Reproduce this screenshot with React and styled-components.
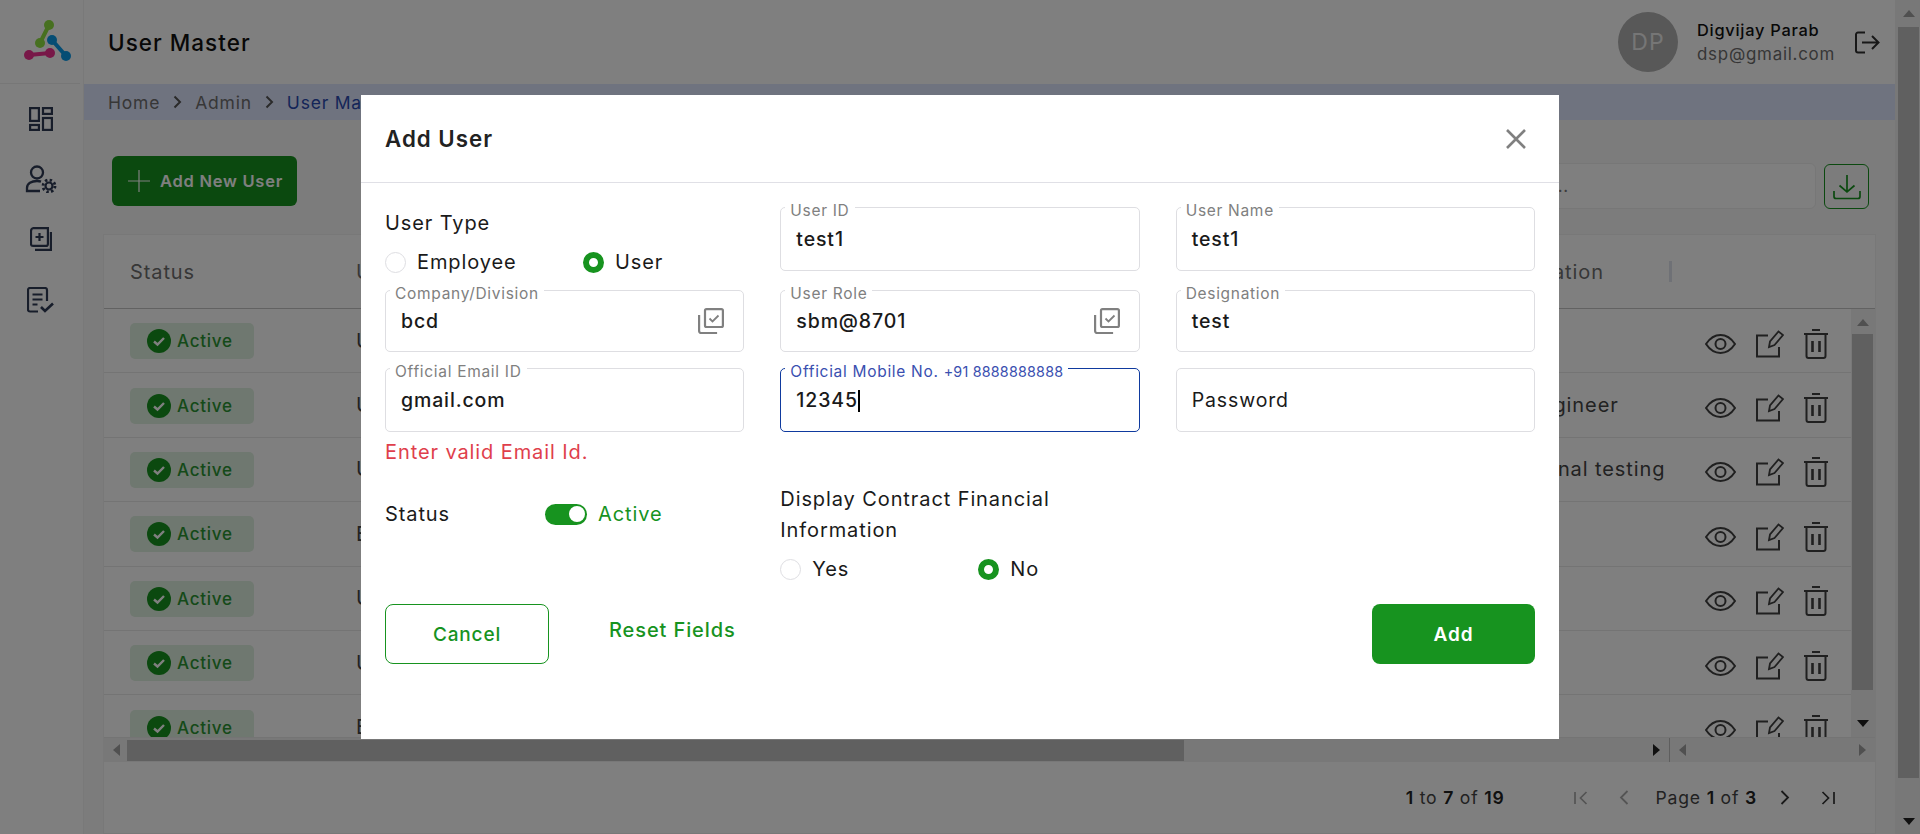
import React from "react";
import styled, { createGlobalStyle } from "styled-components";

const Global = createGlobalStyle`
  html, body { margin: 0; padding: 0; height: 834px; overflow: hidden; background: #fff; }
  body { font-family: "Inter", "Noto Sans", sans-serif; color: #1d1d1f; }
  * { box-sizing: border-box; letter-spacing: .045em; }
`;

const GREEN = "#17931f";

const Page = styled.div`display: flex; width: 1920px; height: 834px; overflow: hidden;`;
const Sidebar = styled.aside`width: 84px; flex: none; background: #fff; border-right: 1px solid #f2f2f2; display: flex; flex-direction: column; align-items: center;`;
const LogoBox = styled.div`width: 80px; margin-right: 3px; height: 84px; flex: none; border-bottom: 1px solid #eee; display: flex; align-items: center; justify-content: flex-start; padding-left: 24px;`;
const NavList = styled.nav`display: flex; flex-direction: column; align-items: center; gap: 34px; padding: 23px 2px 0 0; color: #2f3a55;`;
const NavLast = styled.span`display: flex; margin-top: 2px;`;
const Main = styled.main`flex: 1; min-width: 0; display: flex; flex-direction: column; background: #f9f9f9;`;
const TopBar = styled.header`height: 84px; flex: none; background: #fff; display: flex; align-items: center; padding: 0 15px 0 24px;`;
const PageTitle = styled.h1`margin: 0; flex: 1; font-size: 22.5px; font-weight: 500; color: #111;`;
const Avatar = styled.div`width: 60px; height: 60px; border-radius: 50%; background: #b0b0b0; color: #ececec; display: flex; align-items: center; justify-content: center; font-size: 23px; margin-right: 19px;`;
const UserBox = styled.div`display: flex; flex-direction: column; gap: 4px; width: 158px;`;
const UserName = styled.div`font-size: 16.4px; font-weight: 500; line-height: 20px; color: #111;`;
const UserMail = styled.div`font-size: 16.9px; line-height: 20px; color: #6d6d6d;`;
const Crumbs = styled.div`height: 36px; flex: none; background: #dfe6ff; display: flex; align-items: center; padding-left: 24px; font-size: 17.5px; color: #6f6f6f;`;
const CrumbSep = styled.span`display: flex; margin: 0 13px 0 13px; color: #555;`;
const CrumbNow = styled.span`color: #2a4bb0;`;
const Toolbar = styled.div`flex: none; display: flex; align-items: flex-start; padding: 36px 26px 0 28px; height: 114px;`;
const AddNew = styled.button`width: 185px; height: 50px; border: 0; border-radius: 6px; background: ${GREEN}; color: #fff; font: 600 16.5px "Inter", sans-serif; display: flex; align-items: center; gap: 10px; padding: 0 0 0 16px; white-space: nowrap;`;
const Spacer = styled.div`flex: 1;`;
const Search = styled.div`width: 400px; height: 46px; margin-top: 7px; background: #fff; border: 1px solid #eee; border-radius: 6px; display: flex; align-items: center; justify-content: flex-end; padding-right: 246px; font-size: 17px; color: #777;`;
const DownloadBtn = styled.button`width: 45px; height: 45px; margin: 8px 0 0 8px; padding: 0; border: 1px solid ${GREEN}; border-radius: 6px; background: transparent; color: ${GREEN}; display: flex; align-items: center; justify-content: center;`;

const Card = styled.section`flex: 1; margin: 0 19px; background: #fff; border: 1px solid #f0f0f0; display: flex; flex-direction: column; min-height: 0;`;
const HeadRow = styled.div`height: 74px; flex: none; display: grid; grid-template-columns: 226px 1126px 190px; align-items: center; padding-left: 26px; font-size: 20px; color: #6f6f6f; border-bottom: 1px solid #c4c4c4;`;
const HeadDesignation = styled.div`display: flex; align-items: center; justify-content: space-between;`;
const HeadSep = styled.span`width: 3px; height: 21px; background: #dfe3ec;`;
const BodyWrap = styled.div`height: 428px; flex: none; display: flex; overflow: hidden;`;
const Rows = styled.div`flex: 1; min-width: 0; overflow: hidden;`;
const Row = styled.div`height: 64.4px; display: grid; grid-template-columns: 226px 1126px 223px 1fr; align-items: center; padding-left: 26px; border-bottom: 1px solid #e8e8e8; font-size: 20px; color: #444;`;
const Badge = styled.div`width: 124px; height: 36px; margin-top: 1px; border-radius: 5px; background: #dff0e0; color: #2b9433; display: flex; align-items: center; gap: 6px; padding-left: 17px; font-size: 17px; font-weight: 500;`;
const Actions = styled.div`display: flex; align-items: center; margin-top: 6px; color: #404040;`;
const ActionSlot = styled.span`display: flex; margin-right: ${p => p.$gap}px;`;
const VBar = styled.div`width: 24px; flex: none; background: #f1f1f1; display: flex; flex-direction: column; align-items: center; padding: 10px 0 10px; gap: 8px;`;
const VThumb = styled.div`width: 21px; height: 356px; background: #c1c1c1; margin-left: -1px;`;
const HBar = styled.div`height: 25px; flex: none; background: #f1f1f1; display: flex; align-items: center; border-top: 1px solid #e8e8e8;`;
const HTrack = styled.div`width: 1566px; height: 100%; flex: none; display: flex; align-items: center; padding: 0 9px; border-right: 1px solid #bdbdbd;`;
const HThumb = styled.div`width: 1057px; height: 21px; background: #c1c1c1; margin: 0 auto 0 7px;`;
const HTrack2 = styled.div`flex: 1; height: 100%; display: flex; align-items: center; justify-content: space-between; padding: 0 9px;`;
const Pager = styled.footer`flex: 1; display: flex; align-items: center; justify-content: flex-end; padding-right: 40px; font-size: 17.6px; color: #444;`;
const Count = styled.span`margin-right: 69px; b { font-weight: 600; color: #222; }`;
const PagerBtn = styled.span`display: flex; color: ${p => (p.$off ? "#a8a8a8" : "#333")}; margin: ${p => p.$m};`;
const PageText = styled.span`b { font-weight: 600; color: #222; }`;

const PageBar = styled.div`width: 25px; flex: none; background: #f1f1f1; display: flex; flex-direction: column; align-items: center; padding: 10px 0 9px 2px;`;
const PageThumb = styled.div`width: 21px; height: 751px; background: #c1c1c1; margin: 10px 0 auto;`;

const Overlay = styled.div`position: fixed; inset: 0; background: rgba(0,0,0,.5); display: flex; justify-content: center; align-items: flex-start; padding-top: 95px;`;
const Modal = styled.div`width: 1198px; height: 644px; background: #fff; display: flex; flex-direction: column;`;
const ModalHead = styled.div`height: 88px; flex: none; border-bottom: 1px solid #e0e0e6; display: flex; align-items: center; justify-content: space-between; padding: 0 33px 0 24px;`;
const ModalTitle = styled.h2`margin: 0; font-size: 22.3px; font-weight: 600; color: #222;`;
const Close = styled.button`border: 0; background: none; padding: 0; display: flex; color: #808080;`;
const ModalBody = styled.div`padding: 24px 24px 0; display: flex; flex-direction: column;`;
const FormGrid = styled.div`display: grid; grid-template-columns: repeat(3, 1fr); column-gap: 36px; grid-template-rows: 83px 78px 116px 120px; align-items: start;`;
const GroupLabel = styled.div`font-size: 20px; line-height: 24px; margin-top: 4px; color: #1a1a1a;`;
const RadioRow = styled.div`display: flex; align-items: center; margin-top: ${p => p.$mt || 0}px;`;
const RadioItem = styled.label`display: flex; align-items: center; gap: 11px; font-size: 20px; line-height: 24px; color: #1a1a1a; width: ${p => p.$w}px;`;
const Radio = styled.span`width: 21px; height: 21px; flex: none; border-radius: 50%; background: #fff; border: ${p => (p.$on ? `6px solid ${GREEN}` : "1px solid #dedee2")};`;
const Field = styled.div`position: relative; height: ${p => p.$h}px; border: 1px solid ${p => (p.$focus ? "#0f3a9e" : "#dedee2")}; border-radius: 5px; display: flex; align-items: center; justify-content: space-between; padding: 0 19px 0 15px; font-size: 19.5px; font-weight: ${p => (p.$plain ? 400 : 500)}; color: #1a1a1a;`;
const FloatLabel = styled.span`position: absolute; left: 4px; top: -5px; background: #fff; padding: 0 5px; font-size: 15.5px; line-height: 16px; font-weight: 400; color: ${p => (p.$focus ? "#3a4fb0" : "#808080")}; white-space: nowrap;`;
const FloatHint = styled.span`font-size: 14.3px; letter-spacing: .015em;`;
const Caret = styled.span`display: inline-block; width: 2px; height: 22px; background: #000; vertical-align: -5px;`;
const ErrorText = styled.div`font-size: 20px; line-height: 24px; margin-top: 8px; color: #df3f4c;`;
const StatusRow = styled.div`height: 60px; display: flex; align-items: center; font-size: 20px; color: #1a1a1a;`;
const StatusLabel = styled.span`width: 160px;`;
const Toggle = styled.span`width: 42px; height: 21px; border-radius: 11px; background: ${GREEN}; display: flex; align-items: center; justify-content: flex-end; padding-right: 2px;`;
const Knob = styled.span`width: 16px; height: 16px; border-radius: 50%; background: #fff;`;
const ToggleText = styled.span`margin-left: 11px; color: ${GREEN};`;
const DisplayLabel = styled.div`font-size: 20px; line-height: 31px; color: #1a1a1a; width: 300px;`;
const Footer = styled.div`display: flex; align-items: flex-start;`;
const Cancel = styled.button`width: 164px; height: 60px; border: 1px solid ${GREEN}; border-radius: 8px; background: #fff; color: ${GREEN}; font: 500 19px "Inter", sans-serif;`;
const Reset = styled.button`border: 0; background: none; padding: 0; margin: 14px 0 0 60px; height: 24px; color: ${GREEN}; font: 500 20px "Inter", sans-serif;`;
const AddBtn = styled.button`width: 163px; height: 60px; margin-left: auto; border: 0; border-radius: 8px; background: ${GREEN}; color: #fff; font: 600 19px "Inter", sans-serif;`;

const Logo = () => (
  <svg width="48" height="44" viewBox="0 0 48 44" fill="none">
    <g stroke="#8ee040"><path d="M25 5L16 23" strokeWidth="4" /><circle cx="25" cy="5" r="5" fill="#8ee040" stroke="none" /><circle cx="16" cy="23" r="5" fill="#8ee040" stroke="none" /></g>
    <g stroke="#0a9ae8"><path d="M28 20L42 36" strokeWidth="4" /><circle cx="28" cy="20" r="5" fill="#0a9ae8" stroke="none" /><circle cx="42" cy="36" r="5" fill="#0a9ae8" stroke="none" /></g>
    <g stroke="#f03090"><path d="M5 35L26 33" strokeWidth="4" /><circle cx="5" cy="35" r="5" fill="#f03090" stroke="none" /><circle cx="26" cy="33" r="5" fill="#f03090" stroke="none" /></g>
  </svg>
);
const NavDash = () => (
  <svg width="24" height="24" viewBox="0 0 24 24" fill="none" stroke="currentColor" strokeWidth="2.2">
    <rect x="1.1" y="1.1" width="8.8" height="12.8" /><rect x="14" y="1.1" width="8.9" height="5.8" /><rect x="1.1" y="18" width="8.8" height="4.9" /><rect x="14" y="11" width="8.9" height="11.9" />
  </svg>
);
const NavUser = () => (
  <svg width="32" height="28" viewBox="0 0 32 28" fill="none" stroke="currentColor" strokeWidth="2.3">
    <circle cx="12" cy="7.5" r="6" /><path d="M15 26H2V23c0-4.500 4.500-7 10-7 1.500 0 3 .2 4 .6" />
    <circle cx="24" cy="21" r="3.500" strokeWidth="2.200" /><circle cx="24" cy="21" r="6" strokeWidth="2.800" strokeDasharray="2.400 2.300" />
  </svg>
);
const NavAdd = () => (
  <svg width="22" height="24" viewBox="0 0 22 24" fill="none" stroke="currentColor" strokeWidth="2.200">
    <path d="M4 1.100h13.900v15.800a2 2 0 0 1-2 2H3a2 2 0 0 1-2-2V4a3 3 0 0 1 3-3z" /><path d="M20.900 5v17.900H5" /><path d="M9.500 6v8M5.500 10h8" />
  </svg>
);
const NavReport = () => (
  <svg width="27" height="26" viewBox="0 0 27 26" fill="none" stroke="currentColor" strokeWidth="2.200">
    <path d="M11 24.500H3a2 2 0 0 1-2-2V3a2 2 0 0 1 2-2h15a2 2 0 0 1 2 2v11" /><path d="M5.500 7.500h10M5.500 12.500h10M5.500 17.500h5" /><path d="M14 20l4 4 8-7.500" strokeWidth="2.600" />
  </svg>
);
const Chevron = () => <svg width="9" height="14" viewBox="0 0 9 14" fill="none" stroke="currentColor" strokeWidth="2"><path d="M1.500 1.500L7 7l-5.500 5.500" /></svg>;
const Logout = () => (
  <svg width="25" height="23" viewBox="0 0 25 23" fill="none" stroke="#303030" strokeWidth="2"><path d="M10 1.500H3a2 2 0 0 0-2 2v16a2 2 0 0 0 2 2h7" /><path d="M7 11.500h16M17 5l6.500 6.500L17 18" /></svg>
);
const Plus = () => <svg width="22" height="22" viewBox="0 0 22 22" stroke="#fff" strokeWidth="1.200" style={{ flex: "none" }}><path d="M11 0v22M0 11h22" /></svg>;
const DownloadIcon = () => (
  <svg width="28" height="26" viewBox="0 0 28 26" fill="none" stroke="currentColor" strokeWidth="1.700"><path d="M14 1v17M6.500 11.500L14 18l7.500-6.500" /><path d="M1 17v5.500a2 2 0 0 0 2 2h22a2 2 0 0 0 2-2V17" /></svg>
);
const CheckCircle = () => (
  <svg width="24" height="24" viewBox="0 0 24 24" style={{ flex: "none" }}><circle cx="12" cy="12" r="12" fill={GREEN} /><path d="M7 12.500l3.500 3 6.500-6.500" fill="none" stroke="#fff" strokeWidth="2.400" /></svg>
);
const Eye = () => (
  <svg width="31" height="20" viewBox="0 0 31 20" fill="none" stroke="currentColor" strokeWidth="2"><path d="M1 10C5 4 10 1 15.500 1S26 4 30 10c-4 6-9 9-14.500 9S5 16 1 10z" /><circle cx="15.500" cy="10" r="5" /></svg>
);
const Edit = () => (
  <svg width="28" height="28" viewBox="0 0 28 28" fill="none" stroke="currentColor" strokeWidth="2"><path d="M12 5.500H1v21h22V17" /><path d="M13 17l1-5.500L22.500 1.500 27 5 18.500 15z" strokeWidth="1.800" /></svg>
);
const Trash = () => (
  <svg width="24" height="30" viewBox="0 0 24 30" fill="none" stroke="currentColor" strokeWidth="2"><path d="M0 5h24M8 1h8" /><path d="M2.500 5v22a2 2 0 0 0 2 2h15a2 2 0 0 0 2-2V5" /><path d="M8.500 12v11M15.500 12v11" strokeWidth="2.600" /></svg>
);
const CopyCheck = () => (
  <svg width="26" height="26" viewBox="0 0 26 26" fill="none" stroke="#808080" strokeWidth="2.200"><rect x="7" y="1.100" width="17.900" height="17.900" rx="1.500" /><path d="M1.100 7v16a2 2 0 0 0 2 2h16" /><path d="M11.500 10.500l3 3 6-6" strokeWidth="1.800" /></svg>
);
const CloseIcon = () => <svg width="20" height="20" viewBox="0 0 20 20" stroke="currentColor" strokeWidth="2.600"><path d="M1 1l18 18M19 1L1 19" /></svg>;
const Tri = ({ dir, color = "#505050" }) => {
  const d = { up: "M0 7L6 0l6 7z", down: "M0 0l6 7 6-7z", left: "M7 0L0 6l7 6z", right: "M0 0l7 6-7 6z" }[dir];
  const vertical = dir === "up" || dir === "down";
  return <svg width={vertical ? 12 : 7} height={vertical ? 7 : 12} viewBox={vertical ? "0 0 12 7" : "0 0 7 12"} style={{ flex: "none" }}><path d={d} fill={color} /></svg>;
};
const PgFirst = () => <svg width="14" height="14" viewBox="0 0 14 14" fill="none" stroke="currentColor" strokeWidth="1.700"><path d="M1 1v12M12.500 1L6.500 7l6 6" /></svg>;
const PgPrev = () => <svg width="10" height="15" viewBox="0 0 10 15" fill="none" stroke="currentColor" strokeWidth="1.800"><path d="M8.500 1L2 7.500 8.500 14" /></svg>;
const PgNext = () => <svg width="10" height="15" viewBox="0 0 10 15" fill="none" stroke="currentColor" strokeWidth="1.800"><path d="M1.500 1L8 7.500 1.500 14" /></svg>;
const PgLast = () => <svg width="14" height="14" viewBox="0 0 14 14" fill="none" stroke="currentColor" strokeWidth="1.700"><path d="M13 1v12M1.500 1l6 6-6 6" /></svg>;

const ROWS = [
  ["User", ""],
  ["User", "Site Engineer"],
  ["User", "Functional testing"],
  ["Employee", ""],
  ["User", ""],
  ["User", ""],
  ["Employee", ""],
];

export default function App() {
  return (
    <>
      <Global />
      <Page>
        <Sidebar>
          <LogoBox><Logo /></LogoBox>
          <NavList>
            <NavDash /><NavUser /><NavAdd /><NavLast><NavReport /></NavLast>
          </NavList>
        </Sidebar>
        <Main>
          <TopBar>
            <PageTitle>User Master</PageTitle>
            <Avatar>DP</Avatar>
            <UserBox>
              <UserName>Digvijay Parab</UserName>
              <UserMail>dsp@gmail.com</UserMail>
            </UserBox>
            <Logout />
          </TopBar>
          <Crumbs>
            Home<CrumbSep><Chevron /></CrumbSep>Admin<CrumbSep><Chevron /></CrumbSep><CrumbNow>User Master</CrumbNow>
          </Crumbs>
          <Toolbar>
            <AddNew><Plus />Add New User</AddNew>
            <Spacer />
            <Search>Search...</Search>
            <DownloadBtn><DownloadIcon /></DownloadBtn>
          </Toolbar>
          <Card>
            <HeadRow>
              <span>Status</span>
              <span>User Type</span>
              <HeadDesignation>Designation<HeadSep /></HeadDesignation>
            </HeadRow>
            <BodyWrap>
              <Rows>
                {ROWS.map(([type, designation], i) => (
                  <Row key={i}>
                    <Badge><CheckCircle />Active</Badge>
                    <span>{type}</span>
                    <span>{designation}</span>
                    <Actions>
                      <ActionSlot $gap={20}><Eye /></ActionSlot>
                      <ActionSlot $gap={20}><Edit /></ActionSlot>
                      <ActionSlot $gap={0}><Trash /></ActionSlot>
                    </Actions>
                  </Row>
                ))}
              </Rows>
              <VBar>
                <Tri dir="up" color="#a0a0a0" />
                <VThumb />
                <Spacer />
                <Tri dir="down" color="#202020" />
              </VBar>
            </BodyWrap>
            <HBar>
              <HTrack>
                <Tri dir="left" color="#a0a0a0" />
                <HThumb />
                <Tri dir="right" color="#202020" />
              </HTrack>
              <HTrack2>
                <Tri dir="left" color="#a0a0a0" />
                <Tri dir="right" color="#a0a0a0" />
              </HTrack2>
            </HBar>
            <Pager>
              <Count><b>1</b> to <b>7</b> of <b>19</b></Count>
              <PagerBtn $off $m="0 31px 0 0"><PgFirst /></PagerBtn>
              <PagerBtn $off $m="0 27px 0 0"><PgPrev /></PagerBtn>
              <PageText>Page <b>1</b> of <b>3</b></PageText>
              <PagerBtn $m="0 31px 0 23px"><PgNext /></PagerBtn>
              <PagerBtn><PgLast /></PagerBtn>
            </Pager>
          </Card>
        </Main>
        <PageBar>
          <Tri dir="up" color="#a0a0a0" />
          <PageThumb />
          <Tri dir="down" color="#202020" />
        </PageBar>
      </Page>

      <Overlay>
        <Modal>
          <ModalHead>
            <ModalTitle>Add User</ModalTitle>
            <Close><CloseIcon /></Close>
          </ModalHead>
          <ModalBody>
            <FormGrid>
              <div>
                <GroupLabel>User Type</GroupLabel>
                <RadioRow $mt={15}>
                  <RadioItem $w={198}><Radio />Employee</RadioItem>
                  <RadioItem $w={120}><Radio $on />User</RadioItem>
                </RadioRow>
              </div>
              <Field $h={64}><FloatLabel>User ID</FloatLabel>test1</Field>
              <Field $h={64}><FloatLabel>User Name</FloatLabel>test1</Field>

              <Field $h={62}><FloatLabel>Company/Division</FloatLabel>bcd<CopyCheck /></Field>
              <Field $h={62}><FloatLabel>User Role</FloatLabel>sbm@8701<CopyCheck /></Field>
              <Field $h={62}><FloatLabel>Designation</FloatLabel>test</Field>

              <div>
                <Field $h={64}><FloatLabel>Official Email ID</FloatLabel>gmail.com</Field>
                <ErrorText>Enter valid Email Id.</ErrorText>
              </div>
              <Field $h={64} $focus><FloatLabel $focus>Official Mobile No. <FloatHint>+91 8888888888</FloatHint></FloatLabel><span>12345<Caret /></span></Field>
              <Field $h={64} $plain>Password</Field>

              <StatusRow>
                <StatusLabel>Status</StatusLabel>
                <Toggle><Knob /></Toggle>
                <ToggleText>Active</ToggleText>
              </StatusRow>
              <div>
                <DisplayLabel>Display Contract Financial Information</DisplayLabel>
                <RadioRow $mt={11}>
                  <RadioItem $w={198}><Radio />Yes</RadioItem>
                  <RadioItem $w={100}><Radio $on />No</RadioItem>
                </RadioRow>
              </div>
              <div />
            </FormGrid>
            <Footer>
              <Cancel>Cancel</Cancel>
              <Reset>Reset Fields</Reset>
              <AddBtn>Add</AddBtn>
            </Footer>
          </ModalBody>
        </Modal>
      </Overlay>
    </>
  );
}
